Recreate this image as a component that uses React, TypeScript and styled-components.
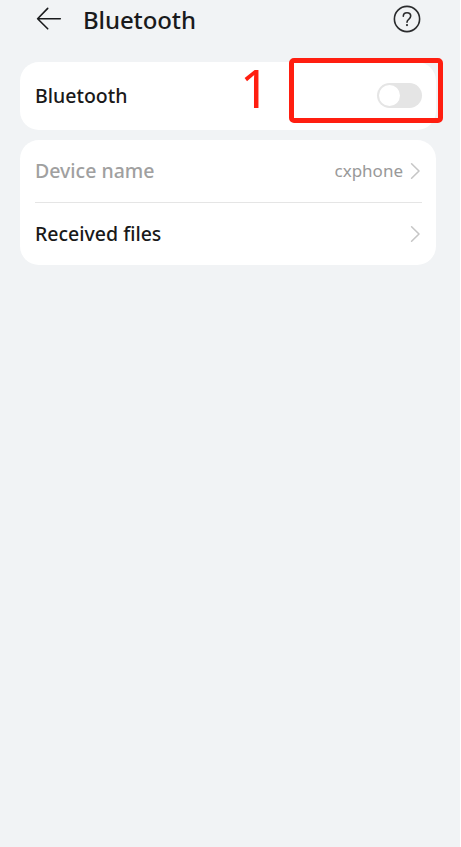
import React from 'react';
import styled, { createGlobalStyle } from 'styled-components';

const GlobalStyle = createGlobalStyle`
  * { box-sizing: border-box; }
  body { margin: 0; background: #fff; font-family: "Noto Sans", "Open Sans", sans-serif; }
`;

const Screen = styled.main`
  width: 460px;
  height: 847px;
  overflow: hidden;
  background: #f1f3f5;
`;

const Header = styled.header`
  display: flex;
  align-items: center;
  height: 38px;
  padding: 0 39px 0 36px;
`;

const Title = styled.h1`
  flex: 1;
  margin: 1px 0 0 21px;
  font-size: 24px;
  line-height: 36px;
  font-weight: 500;
  letter-spacing: -0.1px;
  color: #191a1c;
`;

const IconButton = styled.button`
  display: flex;
  padding: 0;
  border: 0;
  background: none;
`;

const Content = styled.div`
  display: flex;
  flex-direction: column;
  gap: 10px;
  padding: 24px 24px 0 20px;
`;

const Card = styled.section`
  position: relative;
  padding: 0 14px 0 15px;
  border-radius: 19px;
  background: #fff;
`;

const Row = styled.div<{ $height: number; $divided?: boolean }>`
  display: flex;
  align-items: center;
  height: ${({ $height }) => $height}px;
  border-bottom: ${({ $divided }) => ($divided ? '1px solid #e5e5e5' : '0')};
`;

const Label = styled.span<{ $muted?: boolean; $spacing?: number }>`
  flex: 1;
  font-size: 19.5px;
  line-height: 28px;
  font-weight: 500;
  letter-spacing: ${({ $spacing = 0 }) => $spacing}px;
  color: ${({ $muted }) => ($muted ? '#a0a0a0' : '#191919')};
`;

const Value = styled.span`
  margin-right: 7px;
  font-size: 17px;
  line-height: 24px;
  color: #999;
`;

const Switch = styled.button`
  display: flex;
  align-items: center;
  width: 45px;
  height: 25px;
  margin-top: -1px;
  padding: 0 2px;
  border: 0;
  border-radius: 13px;
  background: #e5e5e5;
`;

const Thumb = styled.span`
  width: 21px;
  height: 21px;
  border-radius: 50%;
  background: #fff;
`;

const Highlight = styled.div`
  position: absolute;
  left: 269px;
  top: -4px;
  width: 154px;
  height: 65px;
  border: 5px solid #ff1e10;
  border-radius: 5px;
`;

const StepNumber = styled.span`
  position: absolute;
  left: 220px;
  top: -4px;
  font-size: 52px;
  line-height: 60px;
  color: #ff1e10;
`;

const BackIcon = () => (
  <svg width="26" height="24" viewBox="0 0 26 24" fill="none" stroke="#191a1c" strokeWidth="1.6" strokeLinecap="round" strokeLinejoin="round">
    <path d="M11.7 1.4 1.6 11.7l10.1 10.1M1.6 11.7H24.3" />
  </svg>
);

const HelpIcon = () => (
  <svg width="28" height="28" viewBox="0 0 28 28" fill="none" stroke="#2a2b2d" strokeWidth="1.6" strokeLinecap="round">
    <circle cx="14" cy="14" r="12.6" />
    <path d="M10.3 11.2C10.3 9 11.8 7.7 14 7.7s3.7 1.4 3.7 3.4c0 1.6-1 2.4-2 3.2-1.1.8-1.7 1.5-1.7 2.9" />
    <circle cx="14" cy="20.1" r="1.1" fill="#2a2b2d" stroke="none" />
  </svg>
);

const Chevron = () => (
  <svg width="12" height="18" viewBox="0 0 12 18" fill="none" stroke="#c6c6c6" strokeWidth="1.6" strokeLinecap="round" strokeLinejoin="round">
    <path d="m1.6 1.8 7.4 7.2-7.4 7.2" />
  </svg>
);

export default function App() {
  return (
    <>
      <GlobalStyle />
      <Screen>
        <Header>
          <IconButton aria-label="Back"><BackIcon /></IconButton>
          <Title>Bluetooth</Title>
          <IconButton aria-label="Help"><HelpIcon /></IconButton>
        </Header>
        <Content>
          <Card>
            <Row $height={68}>
              <Label>Bluetooth</Label>
              <Switch role="switch" aria-checked={false} aria-label="Bluetooth"><Thumb /></Switch>
            </Row>
            <StepNumber>1</StepNumber>
            <Highlight />
          </Card>
          <Card>
            <Row $height={63} $divided>
              <Label $muted>Device name</Label>
              <Value>cxphone</Value>
              <Chevron />
            </Row>
            <Row $height={62}>
              <Label>Received files</Label>
              <Chevron />
            </Row>
          </Card>
        </Content>
      </Screen>
    </>
  );
}
